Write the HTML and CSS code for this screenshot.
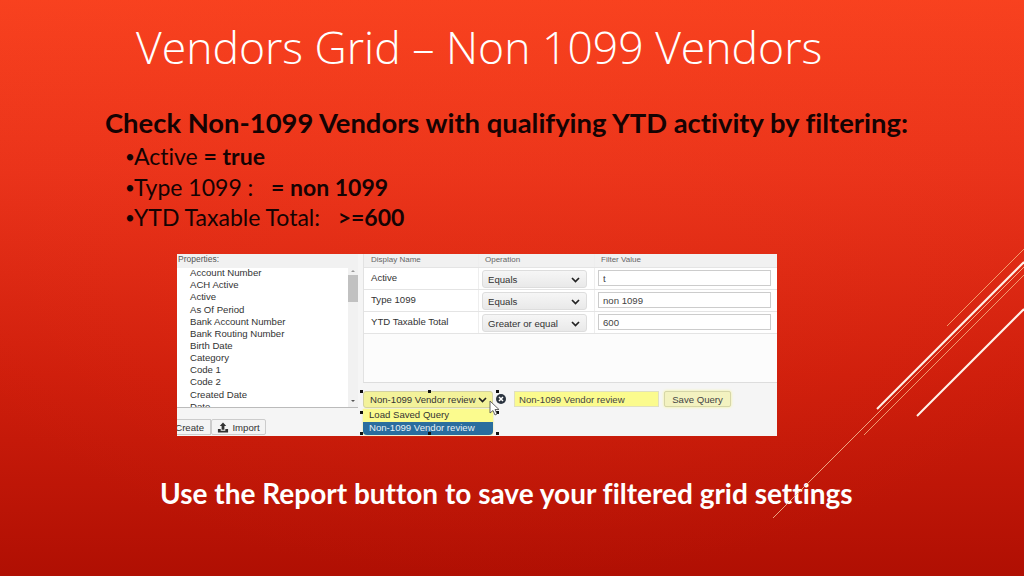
FILE: index.html
```html
<!DOCTYPE html>
<html lang="en">
<head>
    <meta charset="UTF-8">
    <meta name="viewport" content="width=device-width, initial-scale=1.0">
    <title>Vendors Grid</title>
    <link rel="stylesheet" href="styles.css">
</head>
<body>
    <div class="slide">
        <svg class="lines" width="1024" height="576" viewBox="0 0 1024 576">
            <line x1="773" y1="518" x2="1024" y2="267" stroke="#f7c9a0" stroke-width="0.8"/>
            <line x1="864" y1="435" x2="1024" y2="275" stroke="#f2a878" stroke-width="0.9"/>
            <line x1="947" y1="326" x2="1024" y2="249" stroke="#f2a878" stroke-width="0.9"/>
            <line x1="877" y1="409" x2="1024" y2="262" stroke="#fff3ea" stroke-width="2"/>
            <line x1="917" y1="416" x2="1024" y2="309" stroke="#fff3ea" stroke-width="2"/>
        </svg>

        <h1 class="title">Vendors Grid – Non 1099 Vendors</h1>

        <div class="body-text">
            <h2>Check Non-1099 Vendors with qualifying YTD activity by filtering:</h2>
            <ul>
                <li>Active <b>= true</b></li>
                <li>Type 1099 : &nbsp; <b>= non 1099</b></li>
                <li>YTD Taxable Total: &nbsp; <b>&gt;=600</b></li>
            </ul>
        </div>

        <div class="panel">
            <div class="props">
                <div class="panel-head props-head">Properties:</div>
                <div class="prop-list">
                    <div class="prop-items">
                        <div>Account Number</div>
                        <div>ACH Active</div>
                        <div>Active</div>
                        <div>As Of Period</div>
                        <div>Bank Account Number</div>
                        <div>Bank Routing Number</div>
                        <div>Birth Date</div>
                        <div>Category</div>
                        <div>Code 1</div>
                        <div>Code 2</div>
                        <div>Created Date</div>
                        <div>Date</div>
                    </div>
                    <div class="scrollbar">
                        <svg width="10" height="5" viewBox="0 0 10 5"><path d="M3 4 L5 2 L7 4 Z" fill="#999"/></svg>
                        <div class="thumb"></div>
                        <svg class="scroll-down" width="10" height="5" viewBox="0 0 10 5"><path d="M3 1 L5 3 L7 1 Z" fill="#555"/></svg>
                    </div>
                </div>
                <div class="prop-buttons">
                    <div class="btn btn-create">Create</div>
                    <div class="btn btn-import">
                        <svg width="12" height="11" viewBox="0 0 13 11"><path d="M6.500 0 L10 4 H8 V8 H5 V4 H3 Z M1 7 H4 V9 H9 V7 H12 V11 H1 Z" fill="#333"/></svg>
                        Import
                    </div>
                </div>
            </div>

            <div class="filters">
                <div class="grid-box">
                    <div class="grid-row grid-head">
                        <div class="cell-name">Display Name</div>
                        <div class="cell-op">Operation</div>
                        <div class="cell-val">Filter Value</div>
                    </div>
                    <div class="grid-row">
                        <div class="cell-name">Active</div>
                        <div class="cell-op"><div class="select">Equals <svg width="9" height="6" viewBox="0 0 9 6"><path d="M1 1 L4.500 4.500 L8 1" fill="none" stroke="#222" stroke-width="1.700"/></svg></div></div>
                        <div class="cell-val"><input class="text-input" type="text" value="t"></div>
                    </div>
                    <div class="grid-row">
                        <div class="cell-name">Type 1099</div>
                        <div class="cell-op"><div class="select">Equals <svg width="9" height="6" viewBox="0 0 9 6"><path d="M1 1 L4.500 4.500 L8 1" fill="none" stroke="#222" stroke-width="1.700"/></svg></div></div>
                        <div class="cell-val"><input class="text-input" type="text" value="non 1099"></div>
                    </div>
                    <div class="grid-row">
                        <div class="cell-name">YTD Taxable Total</div>
                        <div class="cell-op"><div class="select">Greater or equal <svg width="9" height="6" viewBox="0 0 9 6"><path d="M1 1 L4.500 4.500 L8 1" fill="none" stroke="#222" stroke-width="1.700"/></svg></div></div>
                        <div class="cell-val"><input class="text-input" type="text" value="600"></div>
                    </div>
                </div>

                <div class="query-bar">
                    <div class="query-pick">
                        <div class="select select-query">Non-1099 Vendor review <svg width="9" height="6" viewBox="0 0 9 6"><path d="M1 1 L4.500 4.500 L8 1" fill="none" stroke="#222" stroke-width="1.700"/></svg></div>
                        <div class="dropdown">
                            <div>Load Saved Query</div>
                            <div class="dropdown-on">Non-1099 Vendor review</div>
                        </div>
                        <span class="handle h-tl"></span>
                        <span class="handle h-tm"></span>
                        <span class="handle h-tr"></span>
                        <span class="handle h-ml"></span>
                        <span class="handle h-mr"></span>
                        <span class="handle h-bl"></span>
                        <span class="handle h-bm"></span>
                        <span class="handle h-br"></span>
                        <svg class="cursor" width="11" height="16" viewBox="0 0 11 16"><path d="M1 1 V13 L4 10.500 L6 15 L8 14 L6 9.500 L10 9.500 Z" fill="#fff" stroke="#555" stroke-width="0.900"/></svg>
                    </div>
                    <svg class="clear-icon" width="10" height="10" viewBox="0 0 10 10"><circle cx="5" cy="5" r="5" fill="#2b3440"/><path d="M3 3 L7 7 M7 3 L3 7" stroke="#fff" stroke-width="1.500"/></svg>
                    <input class="query-input" type="text" value="Non-1099 Vendor review">
                    <div class="btn btn-save">Save Query</div>
                </div>
            </div>
        </div>

        <p class="footer-text">Use the Report button to save your filtered grid settings</p>
    </div>
</body>
</html>
```

FILE: styles.css
```css
body {
    margin: 0;
    font-family: "Lato", sans-serif;
    font-variant-ligatures: none;
}
.slide {
    position: relative;
    width: 1024px;
    height: 576px;
    overflow: hidden;
    background:
        radial-gradient(ellipse 700px 500px at 50% 15%, rgba(250, 70, 30, 0.2), rgba(250, 70, 30, 0) 100%),
        linear-gradient(180deg, #f8411f 0%, #e9321a 30%, #cf1e0c 65%, #b00f03 100%);
}
.lines {
    position: absolute;
    left: 0;
    top: 0;
}
.title {
    margin: 0;
    padding: 20px 0 0 136px;
    font-family: "Open Sans", sans-serif;
    font-size: 44.5px;
    font-weight: 300;
    line-height: 54px;
    color: #fff;
    white-space: nowrap;
}
.body-text {
    padding: 32px 0 0 105px;
    color: #150303;
}
.body-text h2 {
    margin: 0;
    font-size: 27.4px;
    font-weight: 700;
    line-height: 34px;
    white-space: nowrap;
}
.body-text ul {
    margin: 0;
    padding: 1px 0 0 20px;
    list-style: none;
}
.body-text li {
    height: 30.7px;
    font-size: 23px;
    line-height: 30.7px;
    white-space: nowrap;
}
.body-text li::before {
    content: "•";
    display: inline-block;
    width: 9px;
    font-size: 17px;
    line-height: 0;
    vertical-align: 2px;
}
.panel {
    display: flex;
    width: 600px;
    height: 182px;
    margin: 21px 0 0 177px;
    background: #f5f5f5;
    font-family: "Liberation Sans", sans-serif;
    font-size: 9.6px;
    color: #333;
}
.props {
    display: flex;
    flex-direction: column;
    width: 181px;
    margin-right: 5px;
}
.panel-head {
    color: #555;
    font-size: 8.5px;
}
.props-head {
    height: 14px;
    line-height: 11px;
    padding-left: 1px;
    background: #f1f1f1;
}
.prop-list {
    display: flex;
    height: 139px;
    background: #fff;
    border-bottom: 1px solid #bbb;
    overflow: hidden;
}
.prop-items {
    flex: 1;
    margin-top: -1px;
    padding: 0 0 0 13px;
    line-height: 12.15px;
}
.scrollbar {
    display: flex;
    flex-direction: column;
    width: 10px;
    background: #f1f1f1;
}
.thumb {
    height: 27px;
    margin-top: 2px;
    background: #c1c1c1;
}
.scroll-down {
    margin-top: auto;
    margin-bottom: 3px;
}
.prop-buttons {
    display: flex;
    padding-top: 11px;
}
.btn {
    display: flex;
    align-items: center;
    justify-content: center;
    gap: 3px;
    height: 16px;
    box-sizing: border-box;
    border: 1px solid #ccc;
    background: #f4f4f4;
    border-radius: 2px;
    white-space: nowrap;
}
.btn-create {
    width: 34px;
    justify-content: flex-end;
    padding-right: 6px;
    overflow: hidden;
    border-left: none;
    border-radius: 0;
}
.btn-import {
    width: 55px;
}
.filters {
    display: flex;
    flex-direction: column;
    flex: 1;
    min-width: 0;
}
.grid-box {
    height: 129px;
    box-sizing: border-box;
    background: #fcfcfc;
    border-bottom: 1px solid #ddd;
    border-left: 1px solid #e2e2e2;
}
.grid-row {
    display: flex;
    height: 22px;
    background: #fff;
    border-bottom: 1px solid #e4e4e4;
    box-sizing: border-box;
}
.grid-head {
    height: 14px;
    background: #f1f1f1;
    color: #666;
    font-size: 8px;
    line-height: 11px;
}
.cell-name {
    width: 115px;
    box-sizing: border-box;
    padding: 4px 0 0 7px;
    border-right: 1px solid #eee;
}
.grid-head .cell-name {
    padding-top: 0;
}
.cell-op {
    width: 116px;
    box-sizing: border-box;
    padding: 2px 0 0 3px;
    border-right: 1px solid #eee;
}
.grid-head .cell-op {
    padding: 0 0 0 6px;
}
.cell-val {
    flex: 1;
    padding: 2px 0 0 3px;
}
.grid-head .cell-val {
    padding: 0 0 0 6px;
}
.select {
    display: flex;
    align-items: center;
    justify-content: space-between;
    width: 105px;
    height: 18px;
    box-sizing: border-box;
    padding: 1px 6px 0 5px;
    background: linear-gradient(#f6f6f6, #e9e9e9);
    border: 1px solid #ddd;
    border-radius: 3px;
    white-space: nowrap;
}
.text-input {
    display: block;
    width: 173px;
    height: 16px;
    box-sizing: border-box;
    padding: 0 4px;
    margin: 0;
    border: 1px solid #ccc;
    background: #fff;
    font: inherit;
    color: #444;
    outline: none;
}
.query-bar {
    display: flex;
    align-items: flex-start;
    padding-top: 8px;
}
.query-pick {
    position: relative;
    width: 130px;
}
.select-query {
    width: 130px;
    height: 17px;
    background: #f3f29a;
    border-color: #d4d2a0;
    padding: 0 5px 0 6px;
}
.dropdown {
    margin-top: 1px;
    background: #fbfb8e;
    border-radius: 0 0 4px 4px;
    line-height: 12px;
    overflow: hidden;
    box-shadow: 0 0 2px #e9e97a;
}
.dropdown div {
    padding: 0 6px;
    height: 13px;
}
.dropdown .dropdown-on {
    background: #2a6d9e;
    color: #e8f0f4;
}
.handle {
    position: absolute;
    width: 3px;
    height: 3px;
    background: #111;
}
.h-tl { left: -3px; top: -1px; }
.h-tm { left: 65px; top: -1px; }
.h-tr { left: 133px; top: -1px; }
.h-ml { left: -3px; top: 20px; }
.h-mr { left: 133px; top: 20px; }
.h-bl { left: -3px; top: 41px; }
.h-bm { left: 65px; top: 41px; }
.h-br { left: 133px; top: 41px; }
.cursor {
    position: absolute;
    left: 126px;
    top: 9px;
}
.clear-icon {
    margin: 3px 8px 0 3px;
    flex: none;
}
.query-input {
    width: 145px;
    height: 16px;
    box-sizing: border-box;
    margin: 0 5px 0 0;
    padding: 0 4px;
    border: 1px solid #e0e0c0;
    background: #fbfb8e;
    font: inherit;
    color: #444;
    outline: none;
}
.btn-save {
    width: 67px;
    background: #f3f2c0;
    border-color: #d6d6a8;
    box-shadow: 0 0 3px #f5f58a;
    color: #444;
}
.footer-text {
    margin: 0;
    padding: 40px 0 0 160px;
    font-size: 28px;
    font-weight: 700;
    line-height: 34px;
    color: #fff;
    white-space: nowrap;
}
```
